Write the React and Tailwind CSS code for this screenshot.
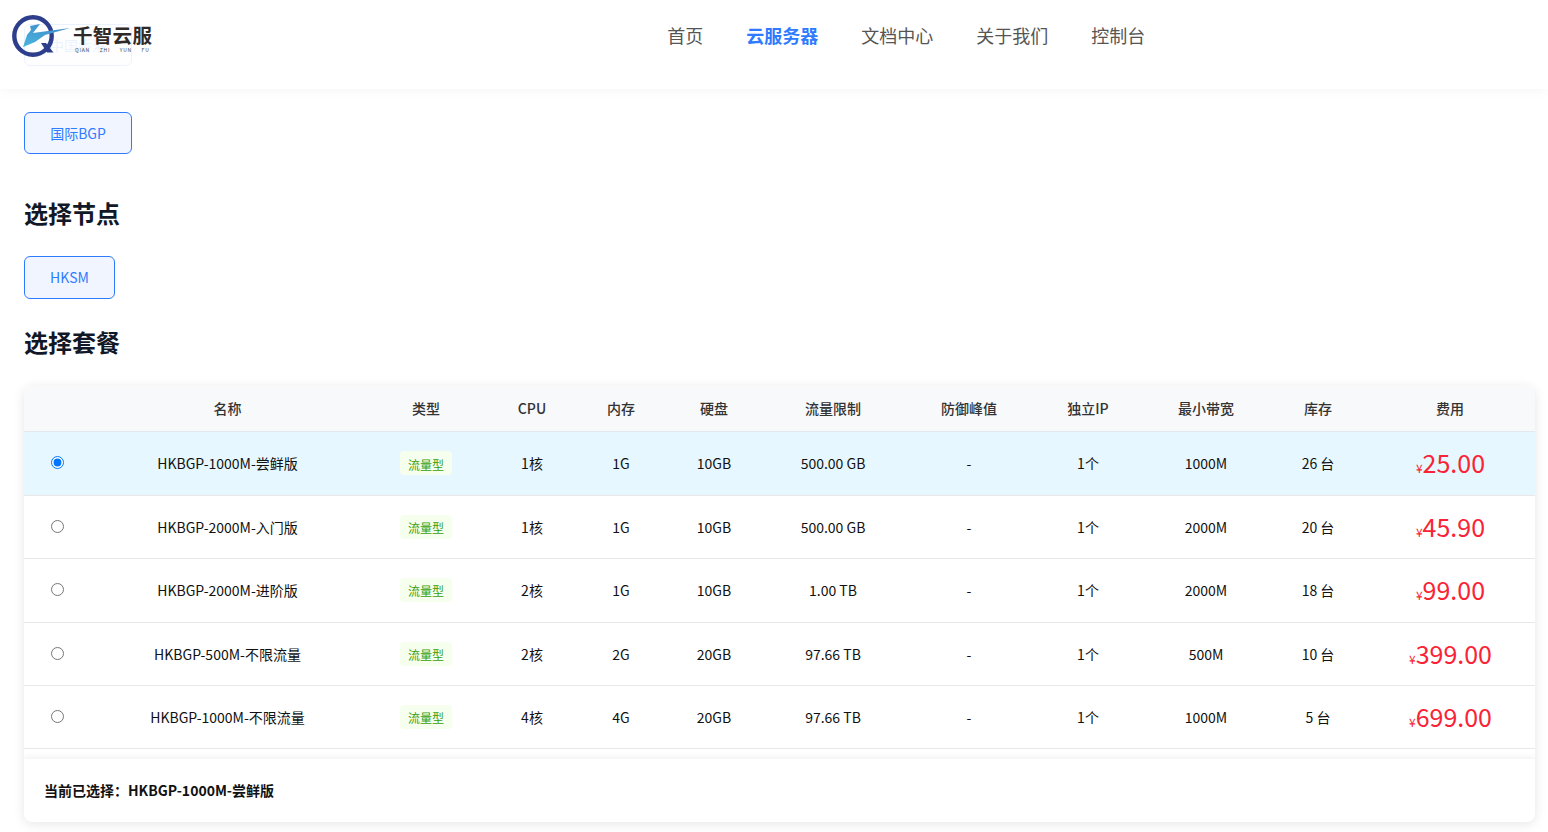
const navItems = ['首页', '云服务器', '文档中心', '关于我们', '控制台'];

const plans = [
  { name: 'HKBGP-1000M-尝鲜版', cpu: '1核', mem: '1G', disk: '10GB', flow: '500.00 GB', bw: '1000M', stock: '26 台', price: '25.00', selected: true, h: 'h-[64px]' },
  { name: 'HKBGP-2000M-入门版', cpu: '1核', mem: '1G', disk: '10GB', flow: '500.00 GB', bw: '2000M', stock: '20 台', price: '45.90', h: 'h-[63px]' },
  { name: 'HKBGP-2000M-进阶版', cpu: '2核', mem: '1G', disk: '10GB', flow: '1.00 TB', bw: '2000M', stock: '18 台', price: '99.00', h: 'h-[64px]' },
  { name: 'HKBGP-500M-不限流量', cpu: '2核', mem: '2G', disk: '20GB', flow: '97.66 TB', bw: '500M', stock: '10 台', price: '399.00', h: 'h-[63px]' },
  { name: 'HKBGP-1000M-不限流量', cpu: '4核', mem: '4G', disk: '20GB', flow: '97.66 TB', bw: '1000M', stock: '5 台', price: '699.00', h: 'h-[63px]' },
];

const columns = [
  { label: '', width: 'w-[66px]' },
  { label: '名称', width: 'w-[275px]' },
  { label: '类型', width: 'w-[122px]' },
  { label: 'CPU', width: 'w-[90px]' },
  { label: '内存', width: 'w-[88px]' },
  { label: '硬盘', width: 'w-[98px]' },
  { label: '流量限制', width: 'w-[140px]' },
  { label: '防御峰值', width: 'w-[132px]' },
  { label: '独立IP', width: 'w-[106px]' },
  { label: '最小带宽', width: 'w-[130px]' },
  { label: '库存', width: 'w-[94px]' },
  { label: '费用', width: 'w-[170px]' },
];

function Logo() {
  return (
    <div className="flex items-start">
      <svg width="62" height="44" viewBox="0 0 62 44" className="shrink-0">
        <defs>
          <linearGradient id="bolt" x1="0.2" y1="1" x2="0.6" y2="0">
            <stop offset="0" stopColor="#4bb3dd" />
            <stop offset="1" stopColor="#3f8fcb" />
          </linearGradient>
        </defs>
        <circle cx="21" cy="22" r="18.7" fill="none" stroke="#2c3e8c" strokeWidth="4.4" />
        <path d="M29 29 L34 29 L41.500 38.500 L35 38.500 Z" fill="#2c3e8c" />
        <path d="M18 12 L28 10 L21 19 L58 14 L33 21 L23 28 L11 33 L15 21 L19 16 Z" fill="url(#bolt)" />
      </svg>
      <div className="-ml-[1px] flex flex-col items-start pt-[10px]">
        <span className="text-[19.5px] leading-[22px] font-bold tracking-[0.3px] text-[#2f2a28]">千智云服</span>
        <span className="mt-[1px] ml-[2px] text-[5px] leading-[6px] tracking-[0.8px] whitespace-pre text-[#444]">QIAN     ZHI     YUN     FU</span>
      </div>
    </div>
  );
}

function OptionButton({ children, className }) {
  return (
    <button className={`flex items-center justify-center rounded-md border border-[#2f7bff] bg-[#f0f5ff] text-sm text-[#2f7bff] ${className}`}>
      {children}
    </button>
  );
}

export default function App() {
  return (
    <div className="relative h-[832px] overflow-hidden bg-white font-['Noto_Sans_CJK_SC',sans-serif]">
      <header className="absolute inset-x-0 top-0 z-10 flex h-[89px] items-start bg-white/90 pl-[12px] pt-[14px] shadow-[0_2px_12px_rgba(0,0,0,0.04)]">
        <Logo />
        <nav className="ml-[515px] flex gap-[43px] pt-[7px] text-[18px] leading-[28px] text-[#555]">
          {navItems.map((item) => (
            <a key={item} className={item === '云服务器' ? 'font-bold text-[#2f7bff]' : ''}>{item}</a>
          ))}
        </nav>
      </header>

      <main className="flex flex-col items-start px-[13px] pt-[24px]">
        <div className="ml-[11px] flex flex-col items-start">
          <OptionButton className="h-[42px] w-[108px]">中国香港</OptionButton>
          <OptionButton className="mt-[46px] h-[42px] w-[108px]">国际BGP</OptionButton>
          <h2 className="mt-[41px] text-2xl leading-[36px] font-bold text-[#111827]">选择节点</h2>
          <OptionButton className="mt-[25px] h-[43px] w-[91px] pb-[2px]">HKSM</OptionButton>
          <h2 className="mt-[25px] text-2xl leading-[36px] font-bold text-[#111827]">选择套餐</h2>
        </div>

        <section className="mt-[26px] ml-[11px] w-[1511px] overflow-hidden rounded-lg bg-white shadow-[0_2px_12px_rgba(0,0,0,0.1)]">
          <table className="w-full table-fixed border-collapse text-center text-sm">
            <thead>
              <tr className="h-[45px] border-b border-[#e4e9ef] bg-[#f8f9fb] text-[#333]">
                {columns.map((col) => (
                  <th key={col.label} className={`${col.width} font-medium`}>{col.label}</th>
                ))}
              </tr>
            </thead>
            <tbody className="text-[#111]">
              {plans.map((plan) => (
                <tr key={plan.name} className={`${plan.h} border-b border-[#e8e8e8] ${plan.selected ? 'bg-[#e6f7ff]' : ''}`}>
                  <td><input type="radio" name="plan" defaultChecked={plan.selected} /></td>
                  <td>{plan.name}</td>
                  <td>
                    <span className={`inline-block h-[24px] rounded bg-[#f6ffed] px-2 text-xs leading-[20px] text-[#389e0d] ${plan.selected ? 'pt-[4px]' : 'pt-[3px]'}`}>流量型</span>
                  </td>
                  <td>{plan.cpu}</td>
                  <td>{plan.mem}</td>
                  <td>{plan.disk}</td>
                  <td>{plan.flow}</td>
                  <td>-</td>
                  <td>1个</td>
                  <td>{plan.bw}</td>
                  <td>{plan.stock}</td>
                  <td className="pl-[1px] text-[#fa2335]">
                    <span className="text-xs">¥</span>
                    <span className="text-[25px]">{plan.price}</span>
                  </td>
                </tr>
              ))}
            </tbody>
          </table>
          <div className="mt-[10px] flex h-[63px] items-center px-5 pb-[1px] text-sm font-bold text-[#111] shadow-[0_-2px_6px_rgba(0,0,0,0.06)]">
            当前已选择：HKBGP-1000M-尝鲜版
          </div>
        </section>
      </main>
    </div>
  );
}
